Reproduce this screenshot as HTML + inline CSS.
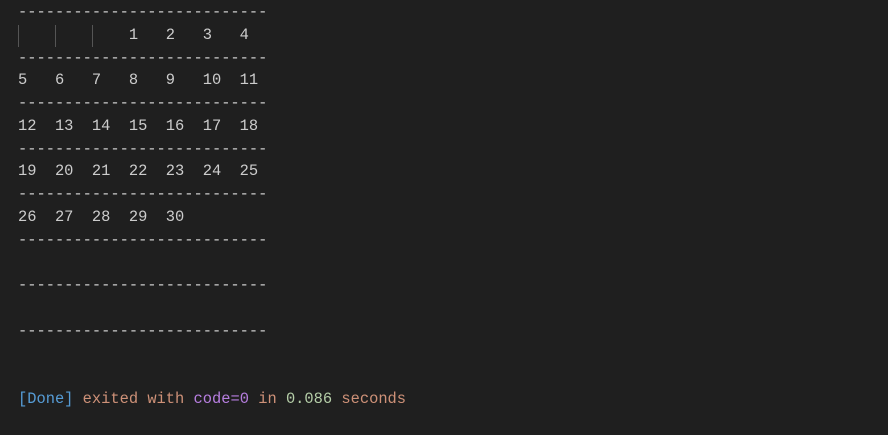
<html><head><style>
body{margin:0;background:#1f1f1f;width:888px;height:435px;overflow:hidden}
pre{margin:0;position:absolute;left:18px;top:1px;font-family:"Liberation Mono",monospace;font-size:15.4px;line-height:22.75px;color:#cccccc}
.g{position:absolute;top:25px;width:1px;height:22px;background:#555}
.b{color:#569cd6}.o{color:#ce9178}.p{color:#b77ee0}.n{color:#b5cea8}
</style></head><body>
<div class="g" style="left:18px"></div><div class="g" style="left:55px"></div><div class="g" style="left:92px"></div>
<pre>---------------------------
            1   2   3   4
---------------------------
5   6   7   8   9   10  11
---------------------------
12  13  14  15  16  17  18
---------------------------
19  20  21  22  23  24  25
---------------------------
26  27  28  29  30
---------------------------

---------------------------

---------------------------


<span class="b">[Done]</span> <span class="o">exited with</span> <span class="p">code=0</span> <span class="o">in</span> <span class="n">0.086</span> <span class="o">seconds</span></pre>
</body></html>
